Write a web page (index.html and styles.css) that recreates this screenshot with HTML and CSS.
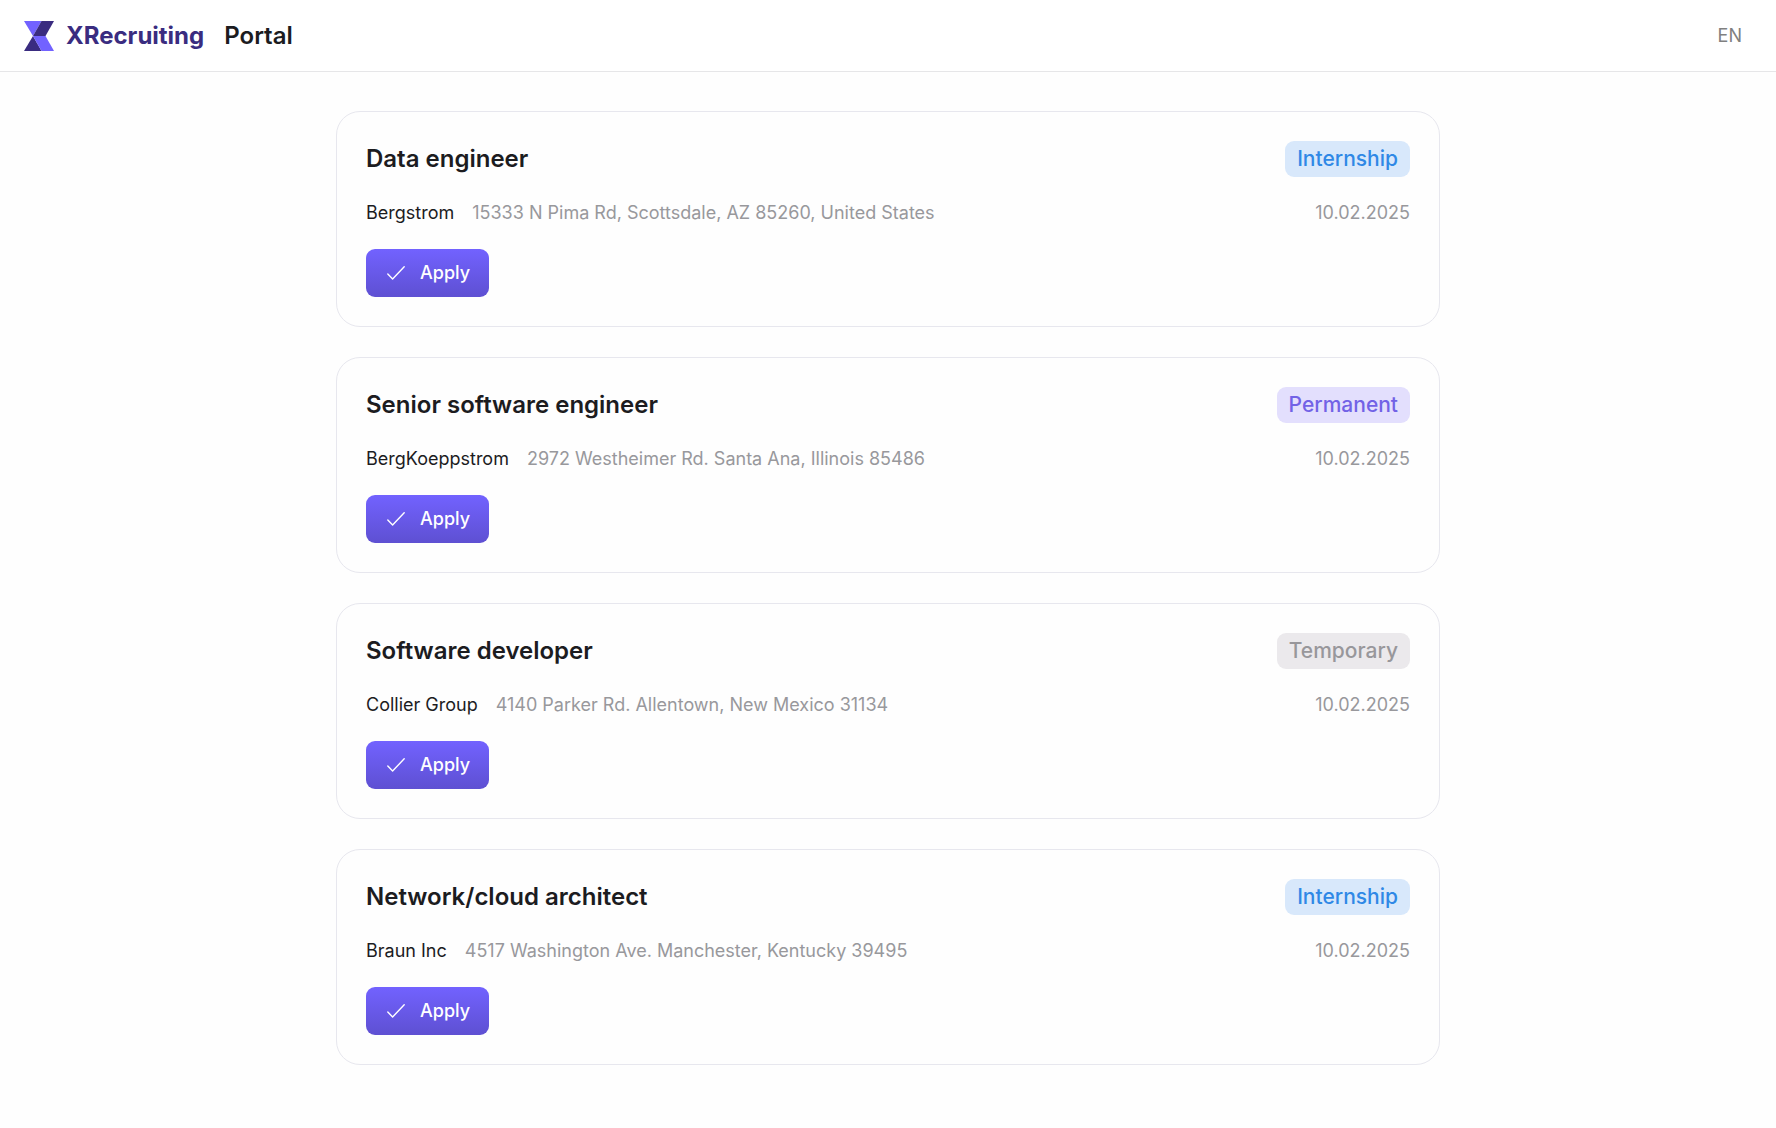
FILE: index.html
```html
<!DOCTYPE html>
<html lang="en">

<head>
    <meta charset="UTF-8">
    <meta name="viewport" content="width=device-width, initial-scale=1.0">
    <title>XRecruiting Portal</title>
    <link rel="stylesheet" href="styles.css">
</head>

<body>
    <!-- Shared check icon -->
    <svg class="icon-defs" aria-hidden="true">
        <symbol id="check" viewBox="0 0 18 18">
            <path d="M0.8 10 L5.6 15 L17.2 2.8" fill="none" stroke="currentColor" stroke-width="1.4" stroke-linecap="round" stroke-linejoin="round" />
        </symbol>
    </svg>

    <header class="header">
        <a href="#" class="brand">
            <svg class="logo" viewBox="0 0 30 30" aria-hidden="true">
                <path d="M0 0 H17.5 L9 15 Z" fill="#7262ff" />
                <path d="M17.5 0 H30 L21.5 15 H9 Z" fill="#3a2c80" />
                <path d="M9 15 L17.5 30 H0 Z" fill="#3a2c80" />
                <path d="M9 15 H21.5 L30 30 H17.5 Z" fill="#7262ff" />
            </svg>
            <span class="brand-name">XRecruiting</span>
            <span class="brand-portal">Portal</span>
        </a>
        <button type="button" class="language">EN</button>
    </header>

    <main class="jobs">
        <article class="job-card">
            <div class="job-row">
                <h2>Data engineer</h2>
                <span class="badge internship">Internship</span>
            </div>
            <div class="job-row job-info">
                <span class="company">Bergstrom</span>
                <span class="address">15333 N Pima Rd, Scottsdale, AZ 85260, United States</span>
                <time class="date" datetime="2025-02-10">10.02.2025</time>
            </div>
            <button type="button" class="apply">
                <svg class="check" aria-hidden="true"><use href="#check" /></svg>
                Apply
            </button>
        </article>

        <article class="job-card">
            <div class="job-row">
                <h2>Senior software engineer</h2>
                <span class="badge permanent">Permanent</span>
            </div>
            <div class="job-row job-info">
                <span class="company">BergKoeppstrom</span>
                <span class="address">2972 Westheimer Rd. Santa Ana, Illinois 85486</span>
                <time class="date" datetime="2025-02-10">10.02.2025</time>
            </div>
            <button type="button" class="apply">
                <svg class="check" aria-hidden="true"><use href="#check" /></svg>
                Apply
            </button>
        </article>

        <article class="job-card">
            <div class="job-row">
                <h2>Software developer</h2>
                <span class="badge temporary">Temporary</span>
            </div>
            <div class="job-row job-info">
                <span class="company">Collier Group</span>
                <span class="address">4140 Parker Rd. Allentown, New Mexico 31134</span>
                <time class="date" datetime="2025-02-10">10.02.2025</time>
            </div>
            <button type="button" class="apply">
                <svg class="check" aria-hidden="true"><use href="#check" /></svg>
                Apply
            </button>
        </article>

        <article class="job-card">
            <div class="job-row">
                <h2>Network/cloud architect</h2>
                <span class="badge internship">Internship</span>
            </div>
            <div class="job-row job-info">
                <span class="company">Braun Inc</span>
                <span class="address">4517 Washington Ave. Manchester, Kentucky 39495</span>
                <time class="date" datetime="2025-02-10">10.02.2025</time>
            </div>
            <button type="button" class="apply">
                <svg class="check" aria-hidden="true"><use href="#check" /></svg>
                Apply
            </button>
        </article>
    </main>
</body>

</html>
```

FILE: styles.css
```css
* {
    box-sizing: border-box;
}

body {
    margin: 0;
    font-family: Inter, "Liberation Sans", sans-serif;
    font-size: 18px;
    line-height: 24px;
    color: #1c1c1f;
    background-color: #fefefe;
}

button {
    font: inherit;
    border: none;
    cursor: pointer;
}

.icon-defs {
    display: none;
}

.header {
    display: flex;
    justify-content: space-between;
    align-items: center;
    height: 72px;
    padding: 0 24px;
    background-color: #ffffff;
    border-bottom: 1px solid #e6e6e8;
}

.brand {
    display: flex;
    align-items: center;
    font-size: 24px;
    line-height: 30px;
    text-decoration: none;
    color: #1c1c1f;
}

.logo {
    width: 30px;
    height: 30px;
    margin-right: 12px;
}

.brand-name {
    font-weight: 700;
    color: #3a2c80;
    margin-right: 20px;
}

.brand-portal {
    font-weight: 600;
}

.language {
    padding: 8px 10px;
    background: none;
    color: #808080;
}

.jobs {
    display: flex;
    flex-direction: column;
    gap: 30px;
    max-width: 1104px;
    margin: 0 auto;
    padding: 39px 0;
}

.job-card {
    display: flex;
    flex-direction: column;
    align-items: flex-start;
    gap: 24px;
    padding: 29px;
    background-color: #fefefe;
    border: 1px solid #e7e7ee;
    border-radius: 24px;
}

.job-row {
    display: flex;
    align-items: center;
    justify-content: space-between;
    width: 100%;
}

h2 {
    margin: 0;
    font-size: 24px;
    font-weight: 600;
    line-height: 30px;
}

.badge {
    padding: 6px 12px;
    border-radius: 9px;
    font-size: 21px;
    font-weight: 500;
}

.internship {
    color: #2f88e6;
    background-color: #d8e8fb;
}

.permanent {
    color: #7262e6;
    background-color: #e3dffd;
}

.temporary {
    color: #98979b;
    background-color: #ebe9ec;
}

.job-info {
    gap: 18px;
}

.address,
.date {
    color: #98989c;
}

.date {
    margin-left: auto;
}

.apply {
    display: flex;
    align-items: center;
    gap: 15px;
    height: 48px;
    padding: 0 19px 0 21px;
    border-radius: 9px;
    font-weight: 500;
    color: #ffffff;
    background: linear-gradient(#7262ff, #5e50d2); /* Purple button */
}

.apply:hover {
    background: #5e50d2;
}

.check {
    width: 18px;
    height: 18px;
}
```
